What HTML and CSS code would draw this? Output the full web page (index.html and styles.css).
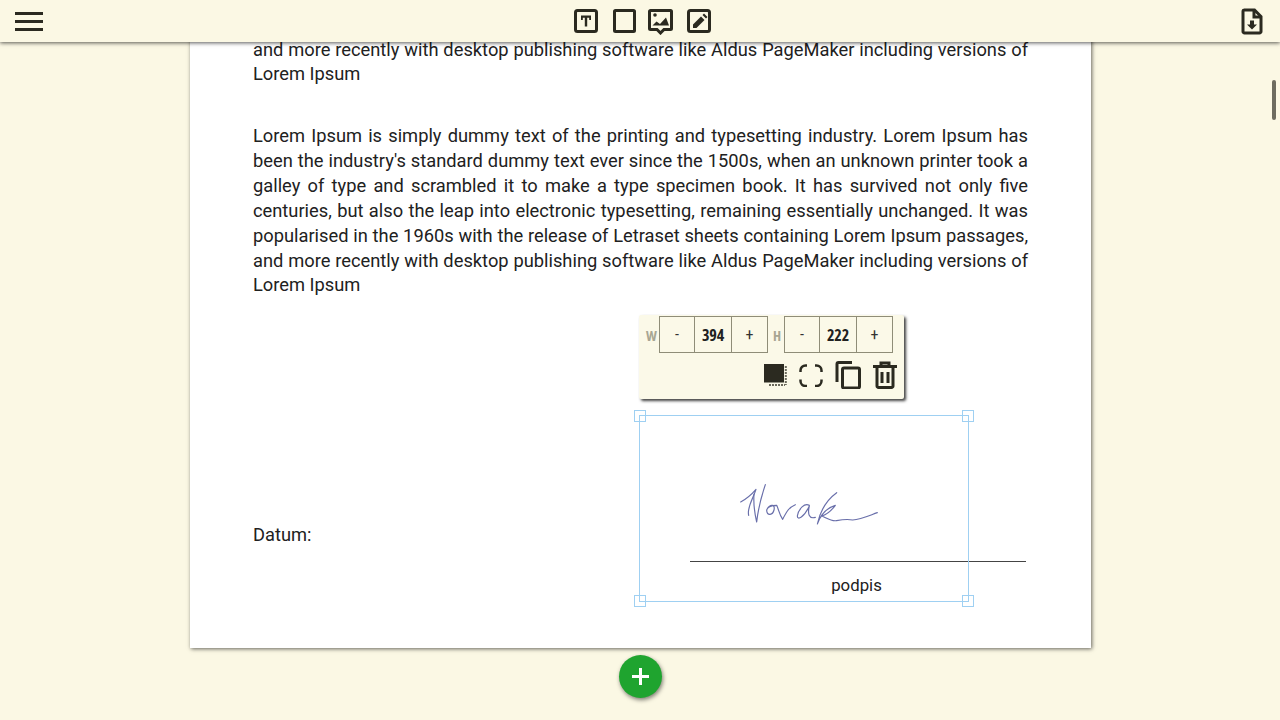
FILE: index.html
```html
<!DOCTYPE html>
<html lang="cs">
<head>
  <meta charset="UTF-8" />
  <meta name="viewport" content="width=device-width, initial-scale=1.0" />
  <title>Editor dokumentu</title>
  <link rel="stylesheet" href="styles.css">
</head>
<body>
  <header class="topbar">
    <button class="menu-btn" aria-label="Menu"><span></span><span></span><span></span></button>
    <div class="tools">
      <svg class="tool" width="24" height="28" viewBox="0 0 24 28"><rect x="1.500" y="3.500" width="21" height="21" rx="2"/><path class="solid" d="M7 8.500h10v4.500h-1.800v-2.300h-2v8.800h-2.400v-8.800h-2v2.300H7z"/></svg>
      <svg class="tool" width="23" height="28" viewBox="0 0 23 28"><rect x="1.500" y="3.500" width="20" height="21" rx="1"/></svg>
      <svg class="tool" width="25" height="28" viewBox="0 0 25 28"><path d="M2.500 3.500h20a1 1 0 0 1 1 1v17a1 1 0 0 1-1 1h-6.500l-3.500 3.500-3.500-3.500h-6.500a1 1 0 0 1-1-1v-17a1 1 0 0 1 1-1z"/><circle class="solid" cx="7" cy="8" r="1.800"/><path class="solid" d="M4.500 18.500l4-4 3.500 2.500 6-6.500 3 8z"/></svg>
      <svg class="tool" width="24" height="28" viewBox="0 0 24 28"><rect x="1.500" y="3.500" width="21" height="21" rx="2"/><path class="solid" d="M6 21v-3.500l8-8 3.500 3.500-8 8zM15.500 8l1.500-1.500 3.500 3.500-1.500 1.500z"/></svg>
    </div>
    <svg class="save" width="22" height="27" viewBox="0 0 22 27"><path class="line" d="M3 2h10.500l6.500 6.500v15a1.500 1.500 0 0 1-1.500 1.500h-15a1.500 1.500 0 0 1-1.500-1.500v-20a1.500 1.500 0 0 1 1.500-1.500z"/><path class="line" d="M13 2v7h7"/><path class="solid" d="M9 12.500h4v4h3l-5 5-5-5h3z"/></svg>
  </header>

  <main class="workspace">
    <section class="sheet">
      <p class="para para-top">and more recently with desktop publishing software like Aldus PageMaker including versions of Lorem Ipsum</p>
      <p class="para">Lorem Ipsum is simply dummy text of the printing and typesetting industry. Lorem Ipsum has been the industry's standard dummy text ever since the 1500s, when an unknown printer took a galley of type and scrambled it to make a type specimen book. It has survived not only five centuries, but also the leap into electronic typesetting, remaining essentially unchanged. It was popularised in the 1960s with the release of Letraset sheets containing Lorem Ipsum passages, and more recently with desktop publishing software like Aldus PageMaker including versions of Lorem Ipsum</p>

      <div class="sign-row">
        <span class="date-label">Datum:</span>
        <div class="sign-block">
          <svg class="signature" width="160" height="70" viewBox="0 0 480 210">
            <path d="M32 96C50 86 66 72 78 58C70 84 50 112 56 136"/>
            <path d="M72 72C70 100 74 130 80 156C84 120 94 80 106 44"/>
            <path d="M112 116C122 100 136 104 132 120C128 136 112 138 110 122C110 112 124 106 140 106C146 118 148 134 158 148C168 128 176 112 196 104"/>
            <path d="M238 106C224 98 206 116 202 138C202 152 222 142 238 108C232 132 238 148 256 142"/>
            <path d="M320 68C298 84 272 116 262 162C272 134 290 114 316 106C304 122 288 134 276 138C290 144 304 154 318 152C340 148 350 146 368 150C392 148 414 138 442 128"/>
          </svg>
          <div class="sign-line"></div>
          <span class="sign-caption">podpis</span>
        </div>
      </div>

      <div class="selection">
        <i class="handle tl"></i><i class="handle tr"></i><i class="handle bl"></i><i class="handle br"></i>
        <div class="popup">
          <div class="popup-row">
            <span class="dim">W</span>
            <div class="stepper"><button>-</button><b>394</b><button>+</button></div>
            <span class="dim dim-h">H</span>
            <div class="stepper"><button>-</button><b>222</b><button>+</button></div>
          </div>
          <div class="popup-actions">
            <svg width="24" height="24" viewBox="0 0 24 24"><path class="solid" d="M1 1h20v18.500H1z"/><path class="dots" d="M22.800 3v19M6 22h16"/></svg>
            <svg width="24" height="24" viewBox="0 0 24 24"><path class="thin" d="M8 2.500H6.500a5 5 0 0 0-5 5V9M16 2.500h1.500a5 5 0 0 1 5 5V9M8 23H6.500a5 5 0 0 1-5-5v-1.500M16 23h1.500a5 5 0 0 0 5-5v-1.500"/></svg>
            <svg width="26" height="28" viewBox="0 0 26 28"><path class="line" d="M2 21V3a1.500 1.500 0 0 1 1.500-1.500H17"/><rect class="line" x="7.500" y="7" width="17" height="20" rx="1.500"/></svg>
            <svg width="24" height="28" viewBox="0 0 24 28"><path class="line" d="M4 7v18a1.500 1.500 0 0 0 1.500 1.500h13A1.500 1.500 0 0 0 20 25V7M0 5.500h24M8 5V2h8v3"/><path class="line" d="M9 11v11M15 11v11"/></svg>
          </div>
        </div>
      </div>
    </section>
    <button class="add-btn" aria-label="Add"><svg width="17" height="17" viewBox="0 0 17 17"><path d="M7 0h3v7h7v3h-7v7H7v-7H0V7h7z"/></svg></button>
  </main>

  <div class="scroll-thumb"></div>
</body>
</html>
```

FILE: styles.css
```css
* {
  margin: 0;
  padding: 0;
  box-sizing: border-box;
}
body {
  font-family: 'Roboto', sans-serif;
  background: #fbf8e4;
  color: #212121;
  height: 720px;
  display: flex;
  flex-direction: column;
  overflow: hidden;
}
button {
  border: none;
  background: none;
  font: inherit;
  color: inherit;
}
.solid {
  fill: #2b2a20;
  stroke: none;
}
.line {
  fill: none;
  stroke: #2b2a20;
  stroke-width: 3;
}
.thin {
  fill: none;
  stroke: #2b2a20;
  stroke-width: 2.500;
}

/* Barra superior */
.topbar {
  position: relative;
  z-index: 5;
  flex: 0 0 42px;
  display: flex;
  align-items: center;
  justify-content: space-between;
  padding: 0 17px 0 15px;
  background: #fbf8e4;
  box-shadow: 0 1px 4px rgba(0,0,0,0.65);
}
.menu-btn {
  width: 28px;
  display: flex;
  flex-direction: column;
  gap: 5px;
}
.menu-btn span {
  height: 3px;
  background: #2b2a20;
}
.tools {
  display: flex;
  gap: 14px;
  align-items: center;
}
.tool {
  fill: none;
  stroke: #2b2a20;
  stroke-width: 3;
}
.tool:nth-child(2) {
  margin-left: 1px;
}
.tool:nth-child(3) {
  margin-left: -2px;
}
.tool .solid {
  stroke: none;
}

/* Hoja */
.workspace {
  flex: 1;
  min-height: 0;
  overflow: hidden;
  display: flex;
  flex-direction: column;
  align-items: center;
  justify-content: flex-end;
}
.sheet {
  position: relative;
  flex-shrink: 0;
  width: 901px;
  margin-left: 1px;
  padding: 0 63px 50px;
  background: #fff;
  box-shadow: 1px 1px 4px rgba(0,0,0,0.6);
  font-size: 18.3px;
  line-height: 24.85px;
}
.para {
  text-align: justify;
  margin-bottom: 38px;
}
.para-top {
  line-height: 24px;
  margin-bottom: 38.500px;
}
.sign-row {
  display: flex;
  justify-content: space-between;
  align-items: flex-end;
  height: 261.800px;
  margin-right: 2px;
}
.date-label {
  margin-bottom: 50px;
}
.sign-block {
  width: 336px;
  display: flex;
  flex-direction: column;
  align-items: center;
}
.signature {
  align-self: flex-start;
  margin: 0 0 21px 40px;
  fill: none;
  stroke: #4f569c;
  stroke-width: 3.500;
  stroke-linecap: round;
  stroke-linejoin: round;
  opacity: 0.85;
}
.sign-line {
  width: 100%;
  height: 1px;
  background: #444;
  margin-bottom: 11px;
}
.sign-caption {
  font-size: 16.800px;
  margin-right: 3px;
}

/* Seleccion y popup */
.selection {
  position: absolute;
  left: 449px;
  bottom: 46px;
  width: 330px;
  height: 187px;
  border: 1px solid #9fd0f2;
}
.handle {
  position: absolute;
  width: 12px;
  height: 12px;
  border: 1px solid #9fd0f2;
}
.handle.tl { left: -6px; top: -6px; }
.handle.tr { right: -6px; top: -6px; }
.handle.bl { left: -6px; bottom: -6px; }
.handle.br { right: -6px; bottom: -6px; }
.popup {
  position: absolute;
  left: -1px;
  bottom: calc(100% + 17px);
  width: 265px;
  height: 84px;
  padding: 1px 7px 0 7px;
  background: #fbf9e8;
  border-radius: 2px;
  box-shadow: 2px 2px 3px rgba(0,0,0,0.75);
  font-family: 'Open Sans', sans-serif;
  font-stretch: 75%;
}
.popup-row {
  display: flex;
  align-items: center;
  height: 37px;
}
.dim {
  width: 13px;
  font-size: 14px;
  font-weight: 700;
  color: #a8a693;
  padding-top: 3px;
}
.dim-h {
  width: 16px;
  padding-left: 5px;
}
.stepper {
  display: grid;
  grid-template-columns: 34px 38px 35px;
  grid-template-rows: 35px;
  width: 109px;
  height: 37px;
  border: 1px solid #8f8d78;
  text-align: center;
}
.stepper button {
  height: 35px;
  padding-top: 1px;
  font-family: 'Roboto', sans-serif;
  font-size: 16px;
  color: #333;
}
.stepper b {
  height: 35px;
  padding-top: 1px;
  line-height: 35px;
  font-size: 16px;
  letter-spacing: -0.2px;
  border-left: 1px solid #8f8d78;
  border-right: 1px solid #8f8d78;
}
.popup-actions {
  display: flex;
  justify-content: flex-end;
  align-items: center;
  gap: 12px;
  margin-top: 8px;
}
.dots {
  fill: none;
  stroke: #6b6a5c;
  stroke-width: 2;
  stroke-dasharray: 2 1;
}

/* Boton agregar */
.add-btn {
  flex: none;
  width: 43px;
  height: 43px;
  margin: 7px 0 22px;
  border-radius: 50%;
  background: #1fa42f;
  box-shadow: 1px 2px 4px rgba(0,0,0,0.5);
  display: flex;
  align-items: center;
  justify-content: center;
}
.add-btn svg {
  fill: #fff;
}
.scroll-thumb {
  position: absolute;
  left: 1272px;
  top: 80px;
  width: 4px;
  height: 40px;
  border-radius: 2px;
  background: #6e6c60;
}
```
